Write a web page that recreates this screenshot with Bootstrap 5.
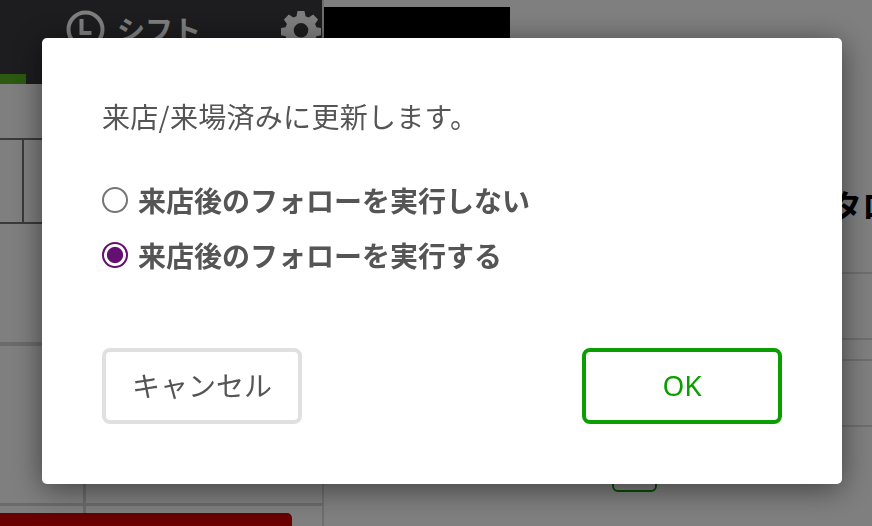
<!DOCTYPE html>
<html lang="ja">
<head>
<meta charset="utf-8">
<title>来店/来場済み</title>
<link href="https://cdn.jsdelivr.net/npm/bootstrap@5.3.0/dist/css/bootstrap.min.css" rel="stylesheet">
<style>
html,body{height:100%;overflow:hidden}
body{font-family:"Noto Sans CJK JP","Noto Sans",sans-serif;background:#fff;color:#000}
.page-left{width:324px;height:526px;border-right:2px solid #ddd;flex:none;overflow:hidden}
.page-head{height:84px;background:#3a3a3e;color:#fff}
.head-main{height:74px;padding-top:10px;padding-left:66px}
.head-label{font-size:28px;font-weight:700;line-height:38px;margin-left:12px;white-space:nowrap}
.head-gear{margin-left:80px;flex:none}
.head-clock{flex:none}
.head-bar{height:10px;width:26px;background:#58b420}
.gap-top{height:56px;border-bottom:2px solid #747474}
.cell-row{height:84px;border-bottom:2px solid #747474}
.cell-a{width:24px;border-right:2px solid #747474}
.gap-mid{height:122px;border-bottom:4px solid #d6d6d6}
.cell-row2{height:160px;border-bottom:3px solid #d6d6d6}
.cell-b{width:86px;border-right:3px solid #d6d6d6;height:100%}
.cell-b2{width:86px;height:7px;border-right:3px solid #d6d6d6}
.red-box{width:292px;height:40px;background:#d00000;border-radius:0 5px 0 0}
.page-right{flex:1;min-width:0;overflow:hidden}
.black-box{width:186px;height:158px;background:#000;margin-top:7px}
.big-title{font-size:32px;font-weight:700;line-height:44px;padding-left:474px;margin-top:17px;white-space:nowrap}
.line-a{height:48px;border-bottom:2px solid #ddd}
.line-b{height:66px;border-bottom:2px solid #ddd}
.line-c{height:21px;border-bottom:2px solid #ddd}
.outline-mini{width:45px;height:40px;border:2px solid #0a9e00;border-radius:6px;margin-left:288px;margin-top:25px}
.dim-layer{position:fixed;inset:0;background:rgba(0,0,0,.5);z-index:1050}
.dlg{position:absolute;left:42px;top:38px;width:800px;height:446px;background:#fff;border-radius:5px;box-shadow:0 5px 30px rgba(0,0,0,.5);padding:54px 60px 60px;color:#555}
.dlg-msg{font-size:28px;line-height:48px;margin:0 0 41px;letter-spacing:.3px}
.dlg-opt{display:flex;align-items:center;margin:0 0 17px;padding:0;min-height:38px}
.dlg-opt .form-check-input{width:26px;height:26px;margin:0 10px 0 0;float:none;border:2px solid #757575;background-color:#fff;flex:none}
.dlg-opt .form-check-input:checked{border-color:#641070;background-color:#fff;background-image:radial-gradient(circle,#641070 0 7.6px,#fff 8.6px)}
.dlg-opt .form-check-label{font-size:28px;font-weight:700;line-height:38px;color:#555}
.dlg-foot{margin-top:74px}
.dlg-btn{width:200px;height:76px;border-width:4px;border-style:solid;border-radius:8px;background:#fff;font-size:28px;padding:0;line-height:1.2}
.dlg-btn-cancel{border-color:#e0e0e0;color:#555}
.dlg-btn-ok{border-color:#0a9e00;color:#0a9e00;font-family:"Noto Sans","Noto Sans CJK JP",sans-serif}
</style>
</head>
<body>
<div class="d-flex">
  <div class="page-left">
    <div class="page-head">
      <div class="head-main d-flex align-items-start">
        <svg class="head-clock" width="39" height="39" viewBox="0 0 39 39" fill="none" stroke="#fff"><circle cx="19.5" cy="19.5" r="17" stroke-width="4"/><path d="M15.5 9v14h10" stroke-width="4"/></svg>
        <span class="head-label">シフト</span>
        <svg class="head-gear" width="40" height="40" viewBox="0 0 40 40"><path fill="#fff" fill-rule="evenodd" d="M16.5 1h7l1 5.3 3.2 1.3 4.500-3 4.900 4.900-3 4.500 1.300 3.200 5.100 1v7l-5.100 1-1.300 3.200 3 4.500-4.900 4.900-4.500-3-3.200 1.300-1 5.300h-7l-1-5.300-3.200-1.300-4.500 3-4.900-4.900 3-4.500-1.300-3.200-5.100-1v-7l5.100-1 1.300-3.200-3-4.500 4.900-4.900 4.500 3 3.200-1.300zM20 13a7.300 7.300 0 1 0 0 14.600a7.300 7.300 0 0 0 0-14.600z"/></svg>
      </div>
      <div class="head-bar"></div>
    </div>
    <div class="gap-top"></div>
    <div class="cell-row"><div class="cell-a h-100"></div></div>
    <div class="gap-mid"></div>
    <div class="cell-row2"><div class="cell-b"></div></div>
    <div class="cell-b2"></div>
    <div class="red-box"></div>
  </div>
  <div class="page-right">
    <div class="black-box"></div>
    <div class="big-title">カタログ</div>
    <div class="line-a"></div>
    <div class="line-b"></div>
    <div class="line-c"></div>
    <div class="line-b"></div>
    <div class="outline-mini"></div>
  </div>
</div>
<div class="dim-layer">
  <div class="dlg">
    <p class="dlg-msg">来店/来場済みに更新します。</p>
    <div class="form-check dlg-opt">
      <input class="form-check-input" type="radio" name="follow" id="f1">
      <label class="form-check-label" for="f1">来店後のフォローを実行しない</label>
    </div>
    <div class="form-check dlg-opt">
      <input class="form-check-input" type="radio" name="follow" id="f2" checked>
      <label class="form-check-label" for="f2">来店後のフォローを実行する</label>
    </div>
    <div class="dlg-foot d-flex justify-content-between">
      <button type="button" class="btn dlg-btn dlg-btn-cancel">キャンセル</button>
      <button type="button" class="btn dlg-btn dlg-btn-ok">OK</button>
    </div>
  </div>
</div>
<script src="https://cdn.jsdelivr.net/npm/bootstrap@5.3.0/dist/js/bootstrap.bundle.min.js"></script>
</body>
</html>
